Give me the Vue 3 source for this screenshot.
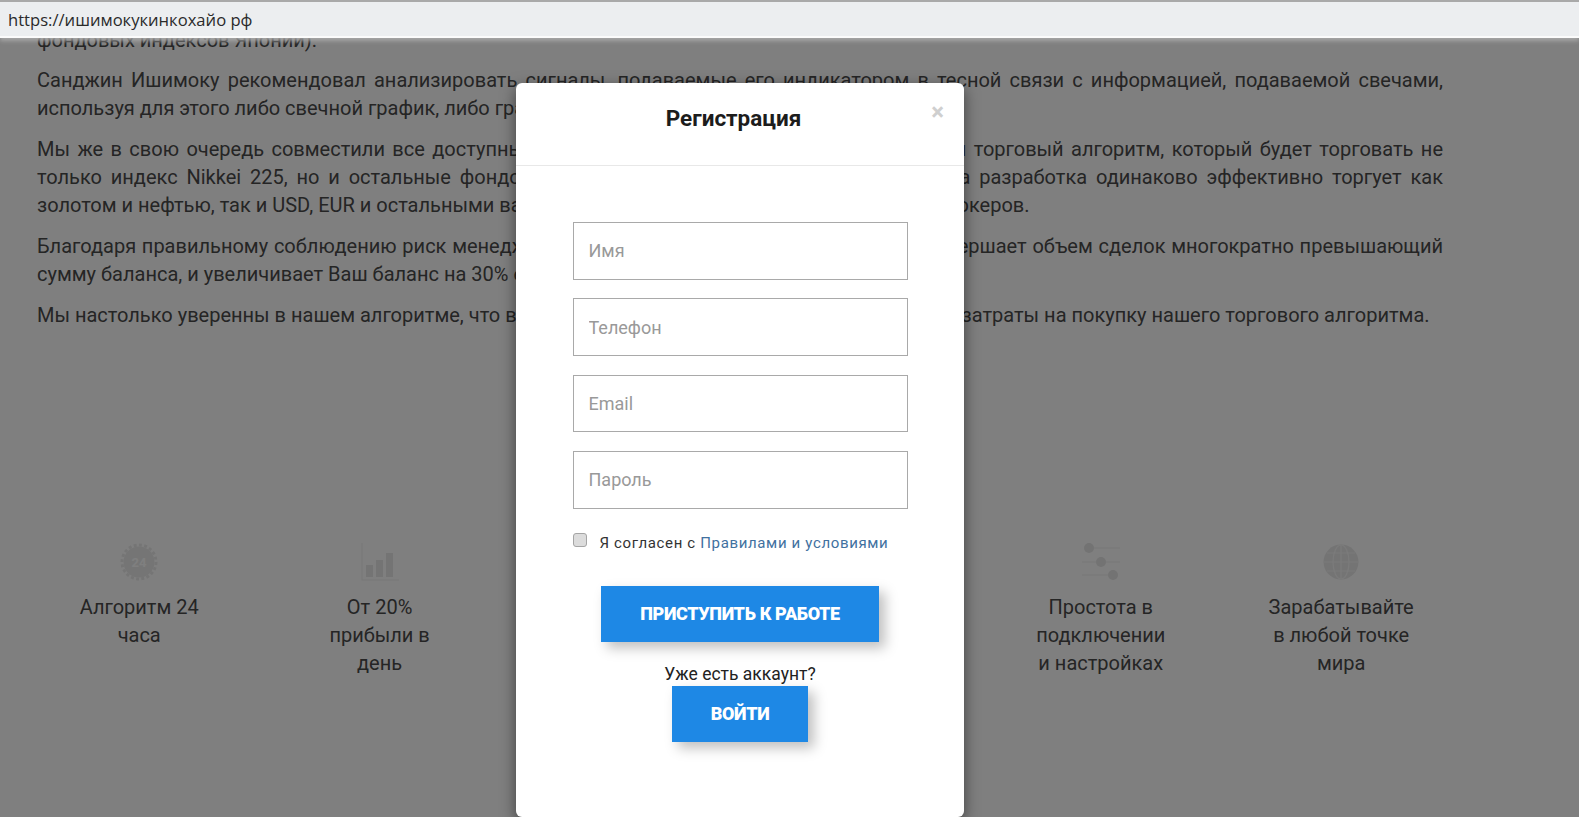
<script setup>
const paragraphs = [
  { lines: ['фондовых индексов Японии).'] },
  { lines: [
    'Санджин Ишимоку рекомендовал анализировать сигналы, подаваемые его индикатором в тесной связи с информацией, подаваемой свечами,',
    'используя для этого либо свечной график, либо график баров.'
  ] },
  { lines: [
    'Мы же в свою очередь совместили все доступные инструменты анализа и создали их единый торговый алгоритм, который будет торговать не',
    'только индекс Nikkei 225, но и остальные фондовые индексы основных мировых бирж. Наша разработка одинаково эффективно торгует как',
    'золотом и нефтью, так и USD, EUR и остальными валютами на счете большинства популярных брокеров.'
  ] },
  { lines: [
    'Благодаря правильному соблюдению риск менеджмента наш проверенный торговый робот совершает объем сделок многократно превышающий',
    'сумму баланса, и увеличивает Ваш баланс на 30% ежемесячно без Вашего участия.'
  ] },
  { lines: [
    'Мы настолько уверенны в нашем алгоритме, что всего за первые месяцы работы бот окупит все затраты на покупку нашего торгового алгоритма.'
  ] }
]
const fields = ['Имя', 'Телефон', 'Email', 'Пароль']
const features = [
  { kind: 'clock', lines: ['Алгоритм 24', 'часа'] },
  { kind: 'bars', lines: ['От 20%', 'прибыли в', 'день'] },
  { kind: 'none', lines: [] },
  { kind: 'none', lines: [] },
  { kind: 'sliders', lines: ['Простота в', 'подключении', 'и настройках'] },
  { kind: 'globe', lines: ['Зарабатывайте', 'в любой точке', 'мира'] }
]
</script>

<template>
  <div class="page">
    <main class="article">
      <p v-for="(p, i) in paragraphs" :key="i" class="para">
        <span
          v-for="(line, j) in p.lines"
          :key="j"
          class="line"
          :class="{ last: j === p.lines.length - 1 }"
        >{{ line }}</span>
      </p>
      <section class="features">
        <div v-for="(f, i) in features" :key="i" class="feature">
          <div class="icon">
            <svg v-if="f.kind === 'clock'" width="38" height="38" viewBox="0 0 38 38">
              <circle cx="19" cy="19" r="15.5" fill="#ebebeb" />
              <circle cx="19" cy="19" r="17" fill="none" stroke="#ebebeb" stroke-width="3" stroke-dasharray="3 2.3" />
              <text x="19" y="24" text-anchor="middle" class="icon-text">24</text>
            </svg>
            <svg v-else-if="f.kind === 'bars'" width="38" height="38" viewBox="0 0 38 38">
              <path d="M1 0V37H38" fill="none" stroke="#f0f0f0" stroke-width="1.2" />
              <rect x="5" y="22" width="7" height="12" fill="#e8e8e8" />
              <rect x="15" y="17" width="7" height="17" fill="#e8e8e8" />
              <rect x="25" y="10" width="7" height="24" fill="#e8e8e8" />
            </svg>
            <svg v-else-if="f.kind === 'sliders'" width="38" height="38" viewBox="0 0 38 38">
              <g stroke="#f0f0f0" stroke-width="1.2">
                <path d="M7 5H38M0 19H38M0 32H31" />
              </g>
              <circle cx="7" cy="5" r="5" fill="#e6e6e6" />
              <circle cx="19" cy="19" r="5" fill="#e6e6e6" />
              <circle cx="31" cy="32" r="5" fill="#e6e6e6" />
            </svg>
            <svg v-else-if="f.kind === 'globe'" width="38" height="38" viewBox="0 0 38 38">
              <circle cx="19" cy="19" r="17.5" fill="#e9e9e9" />
              <g fill="none" stroke="#f6f6f6" stroke-width="1.2">
                <ellipse cx="19" cy="19" rx="8" ry="17" />
                <path d="M19 2V36M2 19H36M5 10H33M5 28H33" />
              </g>
            </svg>
          </div>
          <div class="caption">
            <div v-for="(l, k) in f.lines" :key="k">{{ l }}</div>
          </div>
        </div>
      </section>
    </main>

    <div class="backdrop"></div>

    <div class="urlbar"><span class="url">https://ишимокукинкохайо рф</span></div>

    <div class="modal">
      <header class="modal-head">
        <h2 class="title">Регистрация</h2>
        <span class="close">×</span>
      </header>
      <form class="modal-body" @submit.prevent>
        <input v-for="f in fields" :key="f" class="field" type="text" :placeholder="f" />
        <label class="agree">
          <input class="check" type="checkbox" />
          <span>Я согласен с <a class="link">Правилами и условиями</a></span>
        </label>
        <button class="btn btn-main" type="button">ПРИСТУПИТЬ К РАБОТЕ</button>
        <div class="have">Уже есть аккаунт?</div>
        <button class="btn btn-login" type="button">ВОЙТИ</button>
      </form>
    </div>
  </div>
</template>

<style>
html, body { margin: 0; background: #fff; overflow: hidden; }
</style>

<style scoped>
.page {
  position: relative;
  width: 1579px;
  height: 817px;
  overflow: hidden;
  font-family: Roboto, "Liberation Sans", sans-serif;
  color: #4a4a4a;
  background: #fff;
}
.article { padding: 26.5px 136px 0 37px; }
.para { margin: 0 0 13.2px; font-size: 20px; line-height: 27.8px; }
.line { display: block; text-align: justify; text-align-last: justify; white-space: nowrap; }
.line.last { text-align-last: left; }
.features {
  display: grid;
  grid-template-columns: repeat(6, 240.4px);
  margin: 214px 0 0 -18px;
}
.feature { display: flex; flex-direction: column; align-items: center; }
.icon { height: 38px; width: 38px; }
.icon svg { display: block; }
.icon-text { font: 700 13px Roboto, sans-serif; fill: #fff; }
.caption { margin-top: 12px; font-size: 20px; line-height: 28px; text-align: center; white-space: nowrap; }

.backdrop {
  position: absolute;
  inset: 0;
  background: rgba(0, 0, 0, 0.5);
}

.urlbar {
  position: absolute;
  top: 0; left: 0; right: 0;
  height: 34px;
  padding-left: 8px;
  display: flex;
  align-items: center;
  border-top: 2px solid #a9a9a9;
  border-bottom: 2px solid #fbfbfb;
  background: #eceef0;
  box-shadow: 0 3px 4px rgba(170, 170, 170, 0.9);
}
.url { font: 16.6px "Open Sans", "Noto Sans", sans-serif; color: #2a2a2a; }

.modal {
  position: absolute;
  left: 516px;
  top: 83px;
  width: 448px;
  height: 734px;
  background: #fff;
  border-radius: 6px;
  box-shadow: 0 5px 15px rgba(0, 0, 0, 0.5);
  color: #222;
}
.modal-head {
  position: relative;
  height: 83px;
  box-sizing: border-box;
  border-bottom: 1px solid #e8e8e8;
  padding: 19.5px 13px 0 0;
}
.title { margin: 0; font-size: 22.5px; font-weight: 700; line-height: 30px; text-align: center; color: #1c1c1c; }
.close {
  position: absolute;
  top: 14px; right: 20px;
  font-size: 24px; line-height: 30px; font-weight: 700;
  color: #cfcfcf;
}
.modal-body {
  display: flex;
  flex-direction: column;
  align-items: center;
  padding-top: 56px;
}
.field {
  width: 335px;
  height: 57.5px;
  box-sizing: border-box;
  margin-bottom: 18.9px;
  padding: 0 15px;
  border: 1px solid #a9a9a9;
  border-radius: 0;
  outline: none;
  font: 18px Roboto, sans-serif;
  color: #333;
}
.field::placeholder { color: #999; }
.agree {
  width: 335px;
  display: flex;
  align-items: center;
  gap: 13px;
  margin-top: 6px;
  font-size: 15px;
  letter-spacing: 0.65px;
  color: #333;
}
.check {
  appearance: none;
  width: 14px;
  height: 14px;
  margin: -5px 0 0 0;
  flex: none;
  box-sizing: border-box;
  background: #dcdcdc;
  border: 1px solid #a5a5a5;
  border-radius: 3px;
}
.link { color: #41719f; }
.btn {
  display: block;
  height: 56px;
  border: 0;
  background: #1e88e5;
  color: #fff;
  font: 900 18px Roboto, sans-serif;
  letter-spacing: -0.35px;
  box-shadow: 6px 6px 12px rgba(0, 0, 0, 0.25);
}
.btn-main { width: 278px; margin-top: 34px; }
.have { margin-top: 21px; font-size: 17.5px; line-height: 23px; color: #222; }
.btn-login { width: 136px; margin-top: 0; }
</style>
